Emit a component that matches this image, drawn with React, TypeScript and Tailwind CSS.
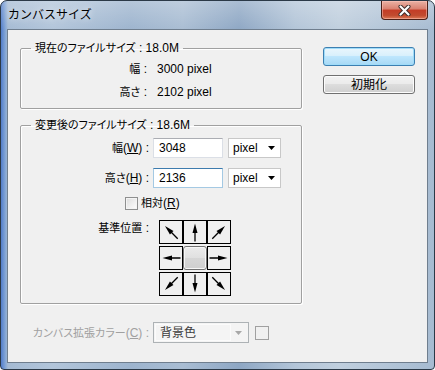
import type { ReactNode } from 'react';

const JP = "font-['Liberation_Sans','Noto_Sans_CJK_JP',sans-serif]";

// Japanese runs are set a touch smaller than the Latin text, as in the dialog.
function J({ children }: { children: ReactNode }) {
  return <span className="text-[11px]">{children}</span>;
}

// Up-pointing arrow, rotated for each outer cell of the anchor grid.
function Arrow({ deg }: { deg: number }) {
  return (
    <svg width="22" height="22" viewBox="0 0 22 22">
      <g transform={`rotate(${deg} 11 11)`}>
        <line x1="11" y1="20.5" x2="11" y2="10" stroke="#000" strokeWidth="1.3" />
        <polygon points="11,2.5 8.5,12 13.5,12" fill="#000" />
      </g>
    </svg>
  );
}

function Cell({ deg }: { deg: number }) {
  return (
    <div className="flex h-[24px] w-[24px] items-center justify-center border border-black bg-[#f0f0f0]">
      <Arrow deg={deg} />
    </div>
  );
}

function Button({ children, primary }: { children: ReactNode; primary?: boolean }) {
  return (
    <div
      className={`flex h-[19px] w-[92px] items-center justify-center rounded-[3px] border text-black ${
        primary
          ? 'border-[#3c7fb1] bg-[linear-gradient(180deg,#eaf6fd_0%,#d9f0fc_45%,#bee6fd_50%,#a7d9f5_100%)] shadow-[inset_0_0_0_1px_#9fdcf9]'
          : 'border-[#707070] bg-[linear-gradient(180deg,#f2f2f2_0%,#ebebeb_45%,#dddddd_50%,#cfcfcf_100%)] shadow-[inset_0_0_0_1px_#fcfcfc]'
      }`}
    >
      {children}
    </div>
  );
}

function Select({ value }: { value: string }) {
  return (
    <div className="ml-[5px] flex h-[20px] w-[53px] items-center justify-between border border-[#c8c8c8] bg-white pl-[4px] pr-[5px]">
      <span>{value}</span>
      <svg width="7" height="4" viewBox="0 0 7 4">
        <polygon points="0,0 7,0 3.5,4" fill="#000" />
      </svg>
    </div>
  );
}

export default function App() {
  return (
    <div
      className={`${JP} flex h-[370px] w-[435px] flex-col overflow-hidden rounded-t-[7px] rounded-b-[4px] border border-[#2b3947] bg-[linear-gradient(180deg,rgba(255,255,255,0.25)_0px,rgba(255,255,255,0)_30px),linear-gradient(90deg,rgba(55,105,200,0.75)_0px,rgba(90,140,215,0.5)_4px,rgba(90,140,215,0)_7px),linear-gradient(90deg,#a3b9d2_0%,#b2c5da_12%,#9db4ce_30%,#a9bdd3_42%,#8ea7c4_55%,#b3c5d8_68%,#c0cfde_78%,#a6bbd1_100%)] text-[12px] leading-[14px] text-black`}
    >
      {/* Title bar */}
      <div className="flex h-[28px] shrink-0 items-start justify-between">
        <div className="pl-[7px] pt-[7px] [text-shadow:0_0_6px_rgba(255,255,255,0.9)]">カンバスサイズ</div>
        <div className="mr-[6px] flex h-[19px] w-[47px] items-center justify-center rounded-b-[4px] border border-t-0 border-[#4a2018] bg-[linear-gradient(180deg,#eab2a5_0%,#d9806f_45%,#c43c26_50%,#c14b2f_80%,#dc7a57_100%)] shadow-[inset_0_0_0_1px_rgba(255,200,190,0.5)]">
          <svg width="13" height="11" viewBox="0 0 13 11">
            <path d="M2.5 1.5 L10.5 9.5 M10.5 1.5 L2.5 9.5" stroke="#3a2a28" strokeWidth="4" strokeLinecap="round" />
            <path d="M2.5 1.5 L10.5 9.5 M10.5 1.5 L2.5 9.5" stroke="#fff" strokeWidth="2.2" strokeLinecap="round" />
          </svg>
        </div>
      </div>

      {/* Client area */}
      <div className="mx-[6px] mb-[6px] flex h-[334px] border border-[#6f7e8e] bg-[#f0f0f0] [font-feature-settings:'palt']">
        <div className="ml-[12px] mt-[11px] flex w-[282px] flex-col">
          {/* Current size */}
          <fieldset className="rounded-[2px] border border-[#a0a0a0] pb-[9px] shadow-[inset_1px_1px_0_#fff,1px_1px_0_#fff]">
            <legend className="ml-[10px] px-[4px]">
              <J>現在のファイルサイズ</J> : 18.0M
            </legend>
            <div className="mt-[7px] flex flex-col gap-[9px]">
              <div className="flex">
                <div className="w-[126px] text-right">
                  <J>幅</J> :
                </div>
                <div className="ml-[10px]">3000 pixel</div>
              </div>
              <div className="flex">
                <div className="w-[126px] text-right">
                  <J>高さ</J> :
                </div>
                <div className="ml-[10px]">2102 pixel</div>
              </div>
            </div>
          </fieldset>

          {/* New size */}
          <fieldset className="mt-[9px] rounded-[2px] border border-[#a0a0a0] pb-[7px] shadow-[inset_1px_1px_0_#fff,1px_1px_0_#fff]">
            <legend className="ml-[10px] px-[4px]">
              <J>変更後のファイルサイズ</J> : 18.6M
            </legend>
            <div className="mt-[6px] flex items-center">
              <div className="w-[128px] text-right">
                <J>幅</J>(<span className="underline">W</span>) :
              </div>
              <div className="ml-[4px] flex h-[20px] w-[70px] items-center border border-[#dbdfe6] border-t-[#abadb3] bg-white pl-[5px]">3048</div>
              <Select value="pixel" />
            </div>
            <div className="mt-[10px] flex items-center">
              <div className="w-[128px] text-right">
                <J>高さ</J>(<span className="underline">H</span>) :
              </div>
              <div className="ml-[4px] flex h-[20px] w-[70px] items-center border border-[#a4c9e3] border-t-[#3d7bad] bg-white pl-[5px]">2136</div>
              <Select value="pixel" />
            </div>
            <div className="mt-[8px] flex items-center">
              <div className="ml-[104px] h-[13px] w-[13px] border border-[#8e8f8f] bg-[linear-gradient(135deg,#dcdcdc,#fefefe)] shadow-[inset_0_0_0_1px_#f4f4f4]" />
              <div className="ml-[3px]">
                <J>相対</J>(<span className="underline">R</span>)
              </div>
            </div>
            <div className="mt-[10px] flex items-start">
              <div className="w-[128px] pt-[1px] text-right">
                <J>基準位置</J> :
              </div>
              <div className="ml-[10px] grid grid-cols-[24px_24px_24px] gap-y-[2px]">
                <Cell deg={-45} />
                <Cell deg={0} />
                <Cell deg={45} />
                <Cell deg={-90} />
                <div className="h-[24px] w-[24px] rounded-[3px] border border-[#707070] bg-[linear-gradient(180deg,#ebebeb_0%,#e0e0e0_50%,#d6d6d6_51%,#cfcfcf_100%)] shadow-[inset_0_0_0_1px_#f6f6f6]" />
                <Cell deg={90} />
                <Cell deg={-135} />
                <Cell deg={180} />
                <Cell deg={135} />
              </div>
            </div>
          </fieldset>

          {/* Canvas extension colour (disabled) */}
          <div className="mt-[18px] flex items-center">
            <div className="w-[129px] text-right text-[#a0a0a0]">
              <J>カンバス拡張カラー</J>(<span className="underline">C</span>) :
            </div>
            <div className="ml-[4px] flex h-[21px] w-[96px] items-center justify-between border border-[#adb2b5] bg-[#f4f4f4] p-[1px] pr-[6px]">
              <div className="flex h-full w-[76px] items-center border border-[#fbfbfb] bg-[#f4f4f4] pl-[4px] text-[#3c3c3c]">背景色</div>
              <svg width="7" height="4" viewBox="0 0 7 4">
                <polygon points="0,0 7,0 3.5,4" fill="#a8a8a8" />
              </svg>
            </div>
            <div className="ml-[6px] h-[14px] w-[14px] border border-[#a0a0a0] bg-[#f0f0f0]" />
          </div>
        </div>

        {/* Buttons */}
        <div className="ml-[21px] mt-[17px] flex flex-col gap-[9px]">
          <Button primary>OK</Button>
          <Button>初期化</Button>
        </div>
      </div>
    </div>
  );
}
